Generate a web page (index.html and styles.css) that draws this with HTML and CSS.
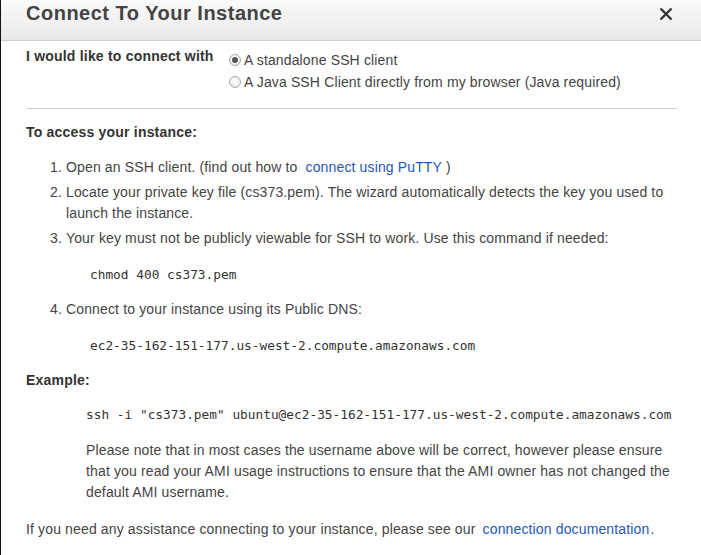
FILE: index.html
```html
<!DOCTYPE html>
<html>
<head>
<meta charset="utf-8">
<link rel="stylesheet" href="styles.css">
</head>
<body>
<div class="dialog">
  <div class="header">
    <h1 class="title">Connect To Your Instance</h1>
    <svg class="close" width="14" height="14" viewBox="0 0 14 14"><path d="M1.5 1.5 L12.5 12.5 M12.5 1.5 L1.5 12.5" stroke="#333" stroke-width="2.4" stroke-linecap="butt"/></svg>
  </div>
  <div class="body">
    <div class="connect-row">
      <div class="connect-label">I would like to connect with</div>
      <div class="options">
        <div class="option"><span class="radio checked"></span>A standalone SSH client</div>
        <div class="option"><span class="radio"></span>A Java SSH Client directly from my browser (Java required)</div>
      </div>
    </div>
    <div class="sep"></div>
    <div class="heading">To access your instance:</div>
    <ol class="steps">
      <li>Open an SSH client. (find out how to <a class="link">connect using PuTTY</a>)</li>
      <li>Locate your private key file (cs373.pem). The wizard automatically detects the key you used to launch the instance.</li>
      <li>Your key must not be publicly viewable for SSH to work. Use this command if needed:
        <div class="code">chmod 400 cs373.pem</div>
      </li>
      <li>Connect to your instance using its Public DNS:
        <div class="code">ec2-35-162-151-177.us-west-2.compute.amazonaws.com</div>
      </li>
    </ol>
    <div class="heading example">Example:</div>
    <div class="example-body">
      <div class="code ssh">ssh -i "cs373.pem" ubuntu@ec2-35-162-151-177.us-west-2.compute.amazonaws.com</div>
      <p class="note">Please note that in most cases the username above will be correct, however please ensure that you read your AMI usage instructions to ensure that the AMI owner has not changed the default AMI username.</p>
    </div>
    <p class="help">If you need any assistance connecting to your instance, please see our <a class="link">connection documentation</a>.</p>
  </div>
</div>
</body>
</html>
```
FILE: styles.css
```css
html, body {
  margin: 0;
  padding: 0;
  background: #fff;
}
body {
  font-family: Arial, "Liberation Sans", sans-serif;
  font-size: 14px;
  color: #444;
  letter-spacing: 0.14px;
}
.dialog {
  border-left: 1px solid #111;
  min-height: 555px;
  box-sizing: border-box;
}
.header {
  height: 40px;
  border-bottom: 1px solid #cfcfcf;
  background: linear-gradient(#fafafa, #e9e9e9);
  display: flex;
  justify-content: space-between;
  align-items: flex-start;
  padding: 0 28px 0 25px;
}
.title {
  margin: 0;
  font-size: 20px;
  line-height: 27px;
  font-weight: bold;
  color: #444;
  letter-spacing: 0.5px;
}
.close {
  margin-top: 7px;
}
.body {
  padding: 0 24px 0 25px;
}
.connect-row {
  display: flex;
  padding-top: 8px;
}
.connect-label {
  width: 203px;
  font-weight: bold;
  line-height: 14px;
  color: #333;
  letter-spacing: 0.2px;
}
.option {
  display: flex;
  align-items: center;
  line-height: 22px;
}
.radio {
  width: 10px;
  height: 10px;
  border: 1px solid #a9a9a9;
  border-radius: 50%;
  background: radial-gradient(circle at 50% 40%, #fff, #e4e4e4);
  margin-right: 3px;
  position: relative;
  box-sizing: content-box;
}
.radio.checked::after {
  content: "";
  position: absolute;
  left: 2px;
  top: 2px;
  width: 6px;
  height: 6px;
  border-radius: 50%;
  background: #555;
}
.sep {
  height: 1px;
  background: #cfcfcf;
  margin-top: 15px;
}
.heading {
  font-weight: bold;
  color: #333;
  line-height: 21px;
  margin-top: 13px;
  letter-spacing: 0.2px;
}
.steps {
  margin: 14px 0 0 0;
  padding-left: 40px;
  line-height: 21px;
}
.steps li {
  margin-bottom: 4px;
}
.steps li:last-child {
  margin-bottom: 0;
}
.link {
  color: #2458b3;
  margin: 0 4px;
  cursor: pointer;
}
.help .link {
  margin: 0 1px 0 3px;
}
.code {
  font-family: "DejaVu Sans Mono", "Liberation Mono", monospace;
  font-size: 12.8px;
  line-height: 21px;
  color: #333;
  letter-spacing: 0;
  margin: 15px 0 14px 24px;
}
.example {
  margin-top: 14px;
}
.example-body {
  padding-left: 60px;
}
.code.ssh {
  margin: 13px 0 0 0;
}
.note {
  margin: 15px 0 0 0;
  line-height: 21px;
}
.help {
  margin: 16px 0 0 0;
  line-height: 21px;
}
```
